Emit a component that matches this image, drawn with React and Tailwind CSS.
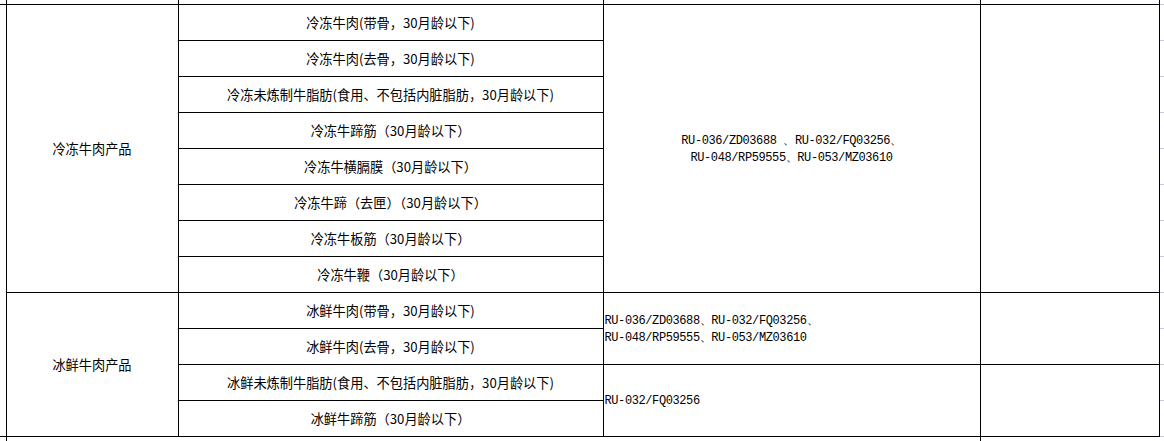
import React from "react";

const frozen = [
  "冷冻牛肉(带骨，30月龄以下)",
  "冷冻牛肉(去骨，30月龄以下)",
  "冷冻未炼制牛脂肪(食用、不包括内脏脂肪，30月龄以下)",
  "冷冻牛蹄筋（30月龄以下）",
  "冷冻牛横膈膜（30月龄以下）",
  "冷冻牛蹄（去匣）（30月龄以下）",
  "冷冻牛板筋（30月龄以下）",
  "冷冻牛鞭（30月龄以下）",
];

const chilled = [
  "冰鲜牛肉(带骨，30月龄以下)",
  "冰鲜牛肉(去骨，30月龄以下)",
  "冰鲜未炼制牛脂肪(食用、不包括内脏脂肪，30月龄以下)",
  "冰鲜牛蹄筋（30月龄以下）",
];

const cjk = { fontFamily: '"Noto Sans CJK SC", "Liberation Sans", sans-serif' };

const code =
  "border border-black p-0 pt-[3px] font-['Liberation_Mono',monospace] text-[12px] leading-[17px] tracking-[-0.4px]";

// Excel gridline beyond the bordered area
const Grid = () => <td className="border-b border-[#c9c9e4] p-0" />;

export default function App() {
  return (
    <div
      className="w-[1164px] h-[441px] overflow-hidden bg-white text-black"
      style={cjk}
    >
      <table className="table-fixed border-collapse text-[13.2px] leading-none">
        <colgroup>
          <col className="w-[6px]" />
          <col className="w-[172px]" />
          <col className="w-[425px]" />
          <col className="w-[377px]" />
          <col className="w-[179px]" />
          <col className="w-[5px]" />
        </colgroup>
        <tbody>
          {/* tail of the row above */}
          <tr className="h-[4px]">
            <td className="border-b border-black p-0" />
            <td className="border-x border-b border-black p-0" />
            <td className="border-x border-b border-black p-0" />
            <td className="border-x border-b border-black p-0" />
            <td className="border-x border-b border-black p-0" />
            <Grid />
          </tr>

          {frozen.map((name, i) => (
            <tr key={name} className="h-[36px]">
              {i === 0 && (
                <>
                  <td rowSpan={12} className="p-0" />
                  <td rowSpan={8} className="border border-black p-0 pt-[2px] text-center">
                    冷冻牛肉产品
                  </td>
                </>
              )}
              <td className="border border-black p-0 pt-[2px] text-center">{name}</td>
              {i === 0 && (
                <>
                  <td rowSpan={8} className={code + " text-center"}>
                    RU-036/ZD03688 、RU-032/FQ03256、
                    <br />
                    RU-048/RP59555、RU-053/MZ03610
                  </td>
                  <td rowSpan={8} className="border border-black p-0" />
                </>
              )}
              <Grid />
            </tr>
          ))}

          {chilled.map((name, i) => (
            <tr key={name} className="h-[36px]">
              {i === 0 && (
                <td rowSpan={4} className="border border-black p-0 pt-[2px] text-center">
                  冰鲜牛肉产品
                </td>
              )}
              <td className="border border-black p-0 pt-[2px] text-center">{name}</td>
              {i === 0 && (
                <>
                  <td rowSpan={2} className={code + " pl-px text-left"}>
                    RU-036/ZD03688、RU-032/FQ03256、
                    <br />
                    RU-048/RP59555、RU-053/MZ03610
                  </td>
                  <td rowSpan={2} className="border border-black p-0" />
                </>
              )}
              {i === 2 && (
                <>
                  <td rowSpan={2} className={code + " pl-px text-left"}>
                    RU-032/FQ03256
                  </td>
                  <td rowSpan={2} className="border border-black p-0" />
                </>
              )}
              <Grid />
            </tr>
          ))}

          {/* head of the row below */}
          <tr className="h-[5px]">
            <td className="border-t border-black p-0" />
            <td className="border-l border-t border-black p-0" />
            <td className="border-t border-black p-0" />
            <td className="border-t border-r border-black p-0" />
            <td className="border-t border-black p-0" />
            <td className="p-0" />
          </tr>
        </tbody>
      </table>
    </div>
  );
}
